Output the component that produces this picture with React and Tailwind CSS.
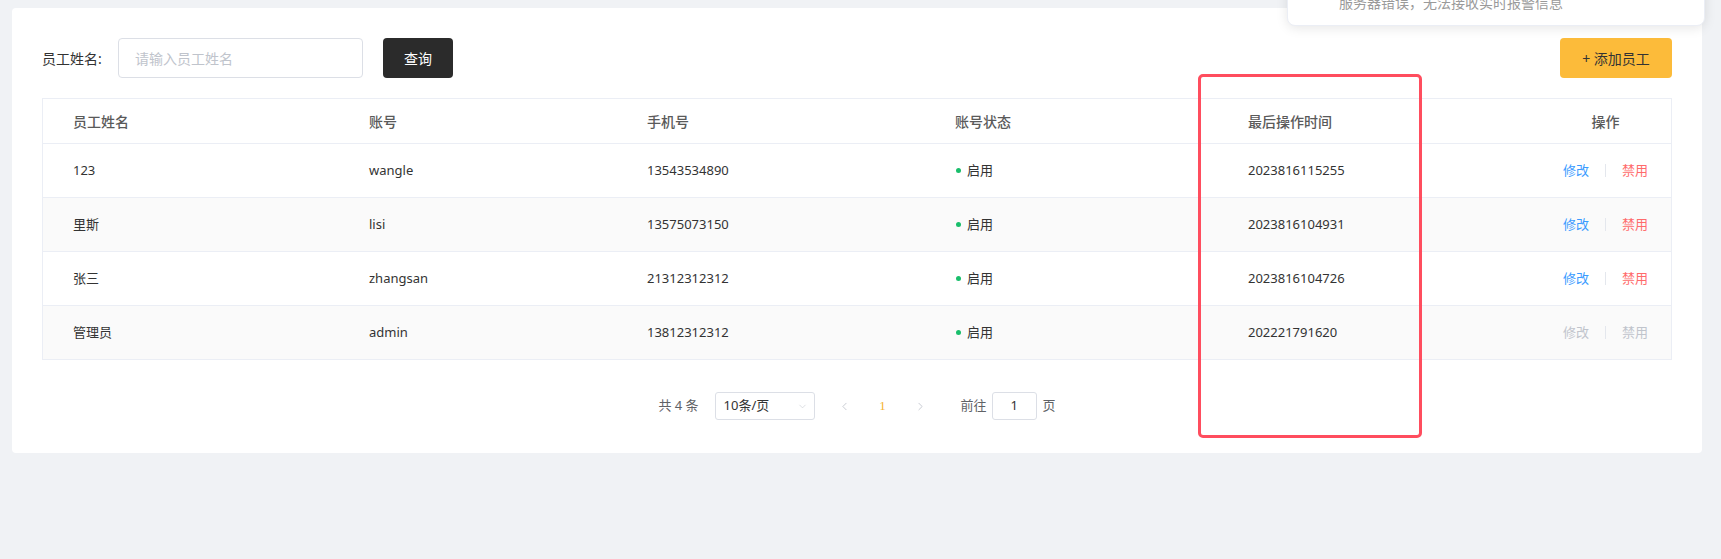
import React from "react";
import { ChevronLeft, ChevronRight, ChevronDown } from "lucide-react";

const rows = [
  { name: "123", account: "wangle", phone: "13543534890", time: "2023816115255", locked: false },
  { name: "里斯", account: "lisi", phone: "13575073150", time: "2023816104931", locked: false },
  { name: "张三", account: "zhangsan", phone: "21312312312", time: "2023816104726", locked: false },
  { name: "管理员", account: "admin", phone: "13812312312", time: "202221791620", locked: true },
];

const font = { fontFamily: '"Noto Sans", "Noto Sans CJK SC", sans-serif' };

function HeaderRow() {
  return (
    <div className="flex h-[45px] items-center border-b border-[#ebeef5] text-[14px] font-medium text-[#5a5a5a]">
      <div className="w-[296px] pl-[30px]">员工姓名</div>
      <div className="w-[278px] pl-[30px]">账号</div>
      <div className="w-[308px] pl-[30px]">手机号</div>
      <div className="w-[293px] pl-[30px]">账号状态</div>
      <div className="w-[322px] pl-[30px]">最后操作时间</div>
      <div className="flex-1 text-center">操作</div>
    </div>
  );
}

function DataRow({ row, striped }) {
  return (
    <div
      className={`flex h-[54px] items-center border-b border-[#ebeef5] text-[13px] text-[#333] ${
        striped ? "bg-[#fafafa]" : "bg-white"
      }`}
    >
      <div className="w-[296px] pl-[30px]">{row.name}</div>
      <div className="w-[278px] pl-[30px]">{row.account}</div>
      <div className="w-[308px] pl-[30px]">{row.phone}</div>
      <div className="flex w-[293px] items-center pl-[31px]">
        <span className="mr-[6px] h-[5px] w-[5px] rounded-full bg-[#19be6b]" />
        启用
      </div>
      <div className="w-[322px] pl-[30px]">{row.time}</div>
      <div className="flex flex-1 items-center justify-center">
        <span className={row.locked ? "text-[#c0c4cc]" : "text-[#3a9bff]"}>修改</span>
        <span className="mx-[16px] h-[13px] w-px bg-[#e4e7ed]" />
        <span className={row.locked ? "text-[#c0c4cc]" : "text-[#ff6b6b]"}>禁用</span>
      </div>
    </div>
  );
}

function Pager() {
  return (
    <div className="mt-[32px] flex h-[28px] items-center justify-center text-[13px] text-[#606266]">
      <span className="whitespace-pre">共 4 条</span>
      <div className="ml-[16px] flex h-[28px] w-[100px] items-center justify-between rounded-[3px] border border-[#dcdfe6] pl-[8px] pr-[6px] text-[#333]">
        <span>10条/页</span>
        <ChevronDown size={11} strokeWidth={1.2} className="text-[#c0c4cc]" />
      </div>
      <div className="ml-[15px] flex w-[30px] justify-center text-[#c0c4cc]">
        <ChevronLeft size={13} strokeWidth={1.6} />
      </div>
      <div className="ml-[8px] w-[30px] text-center text-[#f5b332]" style={{ fontFamily: '"Liberation Serif", serif' }}>
        1
      </div>
      <div className="ml-[8px] flex w-[30px] justify-center text-[#c0c4cc]">
        <ChevronRight size={13} strokeWidth={1.6} />
      </div>
      <span className="ml-[25px]">前往</span>
      <div className="ml-[5px] flex h-[28px] w-[45px] items-center justify-center rounded-[3px] border border-[#dcdfe6] text-[#333]">
        1
      </div>
      <span className="ml-[6px]">页</span>
    </div>
  );
}

export default function App() {
  return (
    <div className="relative h-[559px] w-full overflow-hidden bg-[#f0f2f5] pl-3 pr-[19px] pt-2" style={font}>
      <div className="h-[445px] rounded-[4px] bg-white px-[30px] pt-[30px]">
        <div className="flex h-10 items-center">
          <label className="w-[76px] text-[14px] text-[#333]">员工姓名:</label>
          <div className="flex h-10 w-[245px] items-center rounded-[4px] border border-[#dcdfe6] px-[16px] text-[14px] text-[#c0c4cc]">
            请输入员工姓名
          </div>
          <button className="ml-[20px] h-10 w-[70px] rounded-[4px] bg-[#2b2b2b] text-[14px] text-white">
            查询
          </button>
          <button className="ml-auto h-10 w-[112px] rounded-[4px] bg-[#fcbb3a] text-[14px] text-[#333]">
            + 添加员工
          </button>
        </div>
        <div className="mt-5 border-x border-t border-[#ebeef5]">
          <HeaderRow />
          {rows.map((row, i) => (
            <DataRow key={row.account} row={row} striped={i % 2 === 1} />
          ))}
        </div>
        <Pager />
      </div>

      {/* notification, scrolled mostly out of view */}
      <div className="absolute left-[1287px] top-[-40px] h-[66px] w-[418px] rounded-[8px] border border-[#ebeef5] bg-white shadow-[0_2px_12px_rgba(0,0,0,0.1)]">
        <div className="absolute left-[51px] top-[31px] text-[14px] leading-[21px] text-[#9a9a9a]">
          服务器错误，无法接收实时报警信息
        </div>
      </div>

      {/* highlight box */}
      <div className="absolute left-[1198px] top-[74px] h-[364px] w-[224px] rounded-[5px] border-[3px] border-[#ff4d5e]" />
    </div>
  );
}
